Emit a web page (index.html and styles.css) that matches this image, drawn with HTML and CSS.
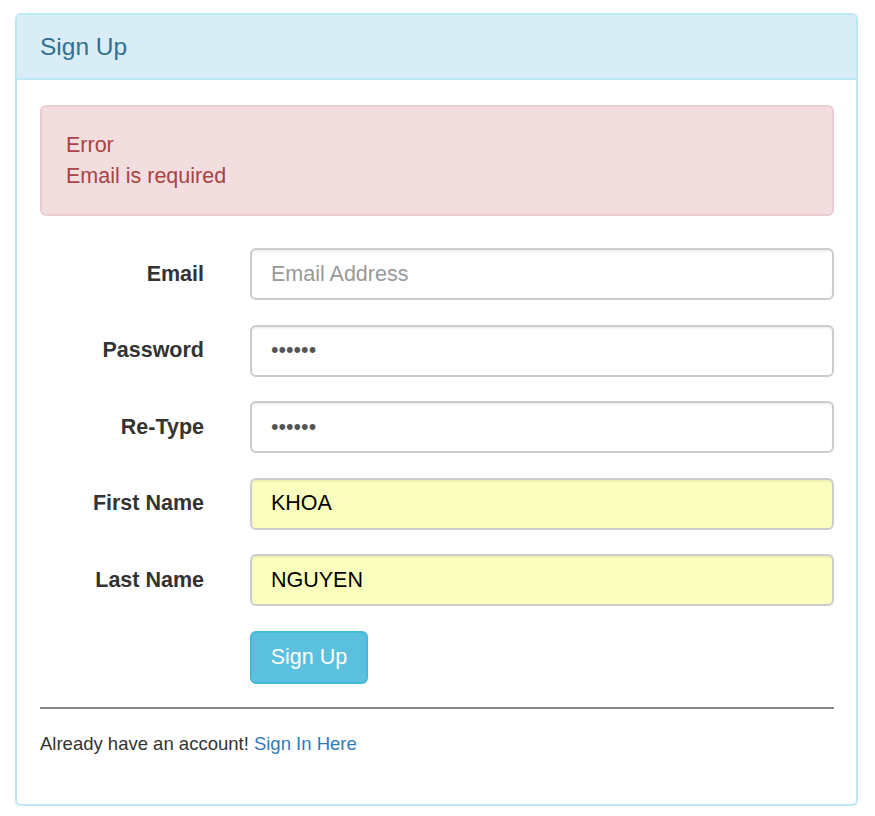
FILE: index.html
```html
<!DOCTYPE html>
<html lang="en">
<head>
<meta charset="utf-8">
<title>Sign Up</title>
<link rel="stylesheet" href="styles.css">
</head>
<body>
<div class="panel">
  <div class="panel-heading">
    <h3 class="panel-title">Sign Up</h3>
  </div>
  <div class="panel-body">
    <div class="alert">
      <div>Error</div>
      <div>Email is required</div>
    </div>
    <form class="form">
      <div class="form-row">
        <label class="form-label" for="email">Email</label>
        <input class="form-control" id="email" type="email" placeholder="Email Address">
      </div>
      <div class="form-row">
        <label class="form-label" for="pw">Password</label>
        <input class="form-control" id="pw" type="password" value="123456">
      </div>
      <div class="form-row">
        <label class="form-label" for="pw2">Re-Type</label>
        <input class="form-control" id="pw2" type="password" value="123456">
      </div>
      <div class="form-row">
        <label class="form-label" for="fn">First Name</label>
        <input class="form-control autofilled" id="fn" type="text" value="KHOA">
      </div>
      <div class="form-row">
        <label class="form-label" for="ln">Last Name</label>
        <input class="form-control autofilled" id="ln" type="text" value="NGUYEN">
      </div>
      <div class="form-row button-row">
        <span></span>
        <div><button type="button" class="btn">Sign Up</button></div>
      </div>
    </form>
    <hr class="divider">
    <p class="footer-text">Already have an account! <a href="#" class="link">Sign In Here</a></p>
  </div>
</div>
</body>
</html>
```

FILE: styles.css
```css
html, body {
  margin: 0;
  padding: 0;
  background: #fff;
}
body {
  font-family: "Liberation Sans", Arial, Helvetica, sans-serif;
  color: #333;
  padding: 13px 17px 0 15px;
}
.panel {
  width: 843px;
  box-sizing: border-box;
  border: 2px solid #bce8f1;
  border-radius: 6px;
  background: #fff;
  box-shadow: 0 1.5px 1.5px rgba(0, 0, 0, 0.05);
}
.panel-heading {
  background: #d9edf7;
  border-bottom: 2px solid #bce8f1;
  border-radius: 4px 4px 0 0;
  padding: 18px 23px;
}
.panel-title {
  margin: 0;
  font-size: 24.5px;
  line-height: 27px;
  font-weight: normal;
  color: #31708f;
}
.panel-body {
  padding: 25px 22px 47px 23px;
}
.alert {
  background: #f2dede;
  border: 2px solid #ebccd1;
  border-radius: 6px;
  color: #a94442;
  font-size: 21.5px;
  line-height: 31px;
  padding: 22.5px 24px;
  margin-bottom: 32px;
}
.form {
  display: flex;
  flex-direction: column;
  gap: 24.5px;
}
.form-row {
  display: grid;
  grid-template-columns: 164px 1fr;
  column-gap: 46px;
  align-items: center;
}
.button-row {
  margin-top: 0.5px;
}
.form-label {
  text-align: right;
  font-weight: bold;
  font-size: 21.5px;
  color: #333;
}
.form-control {
  box-sizing: border-box;
  width: 100%;
  height: 52px;
  margin: 0;
  padding: 0 19px;
  border: 2px solid #ccc;
  border-radius: 6px;
  background: #fff;
  color: #555;
  font-family: "Liberation Sans", Arial, Helvetica, sans-serif;
  font-size: 21.5px;
  box-shadow: inset 0 1.5px 1.5px rgba(0, 0, 0, 0.075);
  outline: none;
}
.form-control::placeholder {
  color: #999;
  opacity: 1;
}
.autofilled {
  background: #faffbd;
  color: #000;
}
.btn {
  box-sizing: border-box;
  height: 53px;
  width: 118px;
  padding: 0;
  background: #5bc0de;
  border: 2px solid #46b8da;
  border-radius: 6px;
  color: #fff;
  font-family: "Liberation Sans", Arial, Helvetica, sans-serif;
  font-size: 21.5px;
  cursor: pointer;
}
.divider {
  margin: 23px 0 22px;
  border: 0;
  height: 2px;
  background: #888;
}
.footer-text {
  margin: 0;
  font-size: 18.5px;
  line-height: 26px;
  color: #333;
}
.link {
  color: #337ab7;
  text-decoration: none;
}
```
